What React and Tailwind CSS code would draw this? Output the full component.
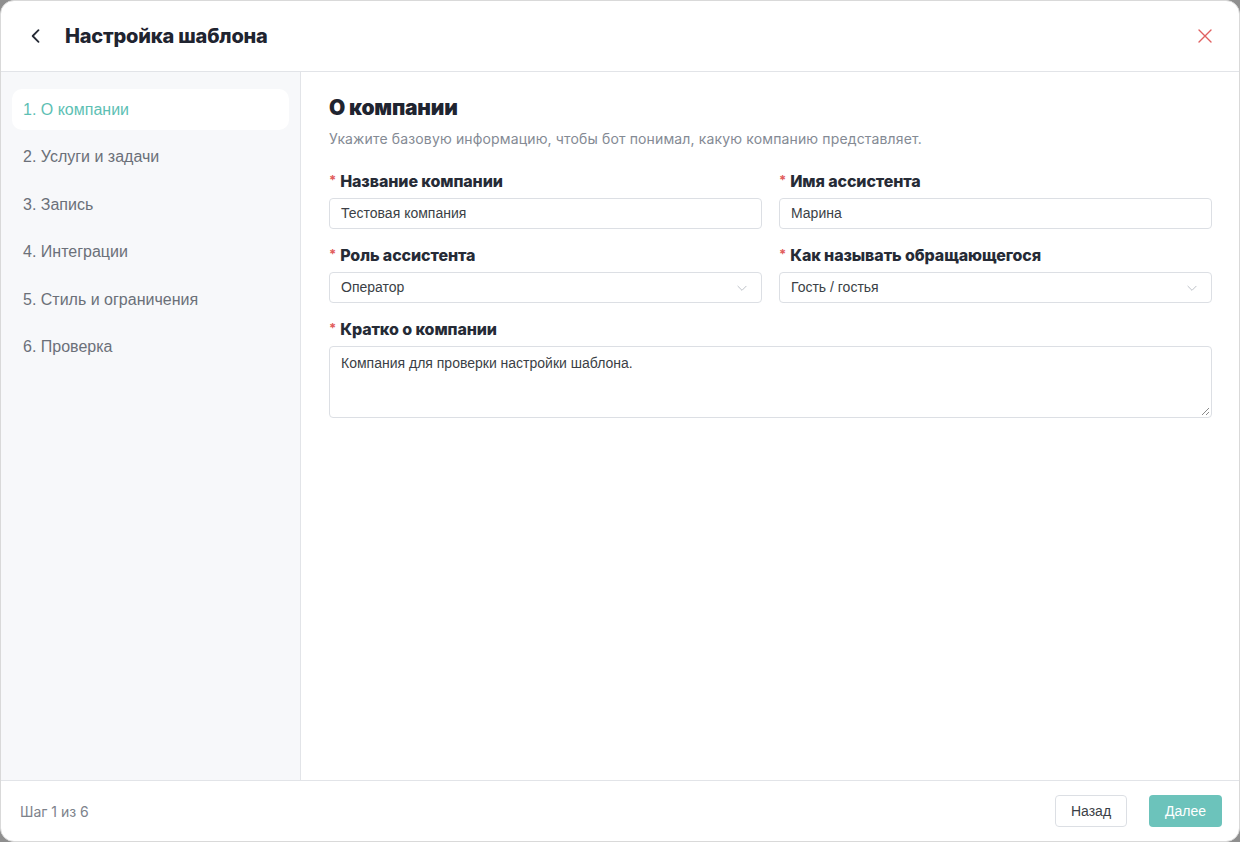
import React from "react";

const steps = [
  "1. О компании",
  "2. Услуги и задачи",
  "3. Запись",
  "4. Интеграции",
  "5. Стиль и ограничения",
  "6. Проверка",
];

function Chevron() {
  return (
    <svg width="14" height="14" viewBox="0 0 24 24" fill="none" stroke="#b8bcc4" strokeWidth="1.6" strokeLinecap="round" strokeLinejoin="round">
      <path d="M5 9l7 7 7-7" />
    </svg>
  );
}

function Label({ children }) {
  return (
    <div className="flex items-center gap-[4px] h-[20px] text-[16px] font-extrabold text-[#262b36] font-['Inter',sans-serif] tracking-[-0.1px]">
      <span className="text-[#e15b5b] text-[13px] font-bold">*</span>
      <span>{children}</span>
    </div>
  );
}

function Input({ value }) {
  return (
    <div className="mt-[7px] h-[31px] rounded-[4px] border border-[#dcdfe4] bg-white px-[11px] flex items-center text-[14px] text-[#3b3f46] font-['Liberation_Sans',sans-serif]">
      {value}
    </div>
  );
}

function Select({ value }) {
  return (
    <div className="mt-[7px] h-[31px] rounded-[4px] border border-[#dcdfe4] bg-white pl-[11px] pr-[12px] flex items-center justify-between text-[14px] text-[#3b3f46] font-['Liberation_Sans',sans-serif]">
      <span>{value}</span>
      <Chevron />
    </div>
  );
}

export default function App() {
  return (
    <div className="w-[1240px] h-[842px] bg-[#8f8f8f] font-['Inter',sans-serif]">
      <div className="w-full h-full bg-white rounded-[14px] border border-[#d9d9d9] overflow-hidden flex flex-col">
        <div className="h-[71px] shrink-0 border-b border-[#e2e4e8] flex items-center pl-[25px] pr-[26px]">
          <svg width="20" height="20" viewBox="0 0 24 24" fill="none" stroke="#262b36" strokeWidth="2.2" strokeLinecap="round" strokeLinejoin="round">
            <path d="M15 5l-7 7 7 7" />
          </svg>
          <div className="ml-[19px] text-[20px] font-extrabold text-[#1f2430] tracking-[-0.2px]">Настройка шаблона</div>
          <div className="flex-1" />
          <svg width="16" height="16" viewBox="0 0 16 16" fill="none" stroke="#e06060" strokeWidth="1.4" strokeLinecap="round">
            <path d="M2 2l12 12M14 2L2 14" />
          </svg>
        </div>
        <div className="flex flex-1 min-h-0">
          <div className="w-[300px] shrink-0 bg-[#f7f8fa] border-r border-[#e2e4e8] pt-[17px] px-[11px] flex flex-col gap-[6.5px]">
            {steps.map((s, i) => (
              <div
                key={s}
                className={
                  "h-[41px] rounded-[10px] flex items-center px-[11px] text-[16px] font-['Liberation_Sans',sans-serif] " +
                  (i === 0 ? "bg-white text-[#5dbfb4]" : "text-[#6b7079]")
                }
              >
                {s}
              </div>
            ))}
          </div>
          <div className="flex-1 pl-[28px] pr-[27px] pt-[22px]">
            <div className="text-[21px] font-black text-[#1f2430] leading-[28px] tracking-[-0.2px]">О компании</div>
            <div className="mt-[7px] text-[14px] text-[#848a94] leading-[20px] tracking-[0.14px]">
              Укажите базовую информацию, чтобы бот понимал, какую компанию представляет.
            </div>
            <div className="mt-[22px] grid grid-cols-2 gap-x-[17px] gap-y-[16px]">
              <div>
                <Label>Название компании</Label>
                <Input value="Тестовая компания" />
              </div>
              <div>
                <Label>Имя ассистента</Label>
                <Input value="Марина" />
              </div>
              <div>
                <Label>Роль ассистента</Label>
                <Select value="Оператор" />
              </div>
              <div>
                <Label>Как называть обращающегося</Label>
                <Select value="Гость / гостья" />
              </div>
              <div className="col-span-2">
                <Label>Кратко о компании</Label>
                <div className="relative mt-[7px] h-[72px] rounded-[4px] border border-[#dcdfe4] bg-white px-[11px] pt-[6px] text-[14px] text-[#3b3f46] font-['Liberation_Sans',sans-serif]">
                  Компания для проверки настройки шаблона.
                  <svg className="absolute right-[1px] bottom-[1px]" width="9" height="9" viewBox="0 0 9 9" stroke="#8a8a8a" strokeWidth="1">
                    <path d="M8 1L1 8M8 5L5 8" />
                  </svg>
                </div>
              </div>
            </div>
          </div>
        </div>
        <div className="h-[61px] shrink-0 border-t border-[#e2e4e8] flex items-center pl-[19px] pr-[17px]">
          <div className="text-[14px] text-[#7d828b]">Шаг 1 из 6</div>
          <div className="flex-1" />
          <button className="h-[32px] w-[72px] rounded-[4px] border border-[#dcdfe4] bg-white text-[14px] text-[#3b3f46] font-['Liberation_Sans',sans-serif]">
            Назад
          </button>
          <button className="ml-[22px] h-[32px] w-[73px] rounded-[4px] bg-[#6cc3bb] text-[14px] text-white font-['Liberation_Sans',sans-serif]">
            Далее
          </button>
        </div>
      </div>
    </div>
  );
}
